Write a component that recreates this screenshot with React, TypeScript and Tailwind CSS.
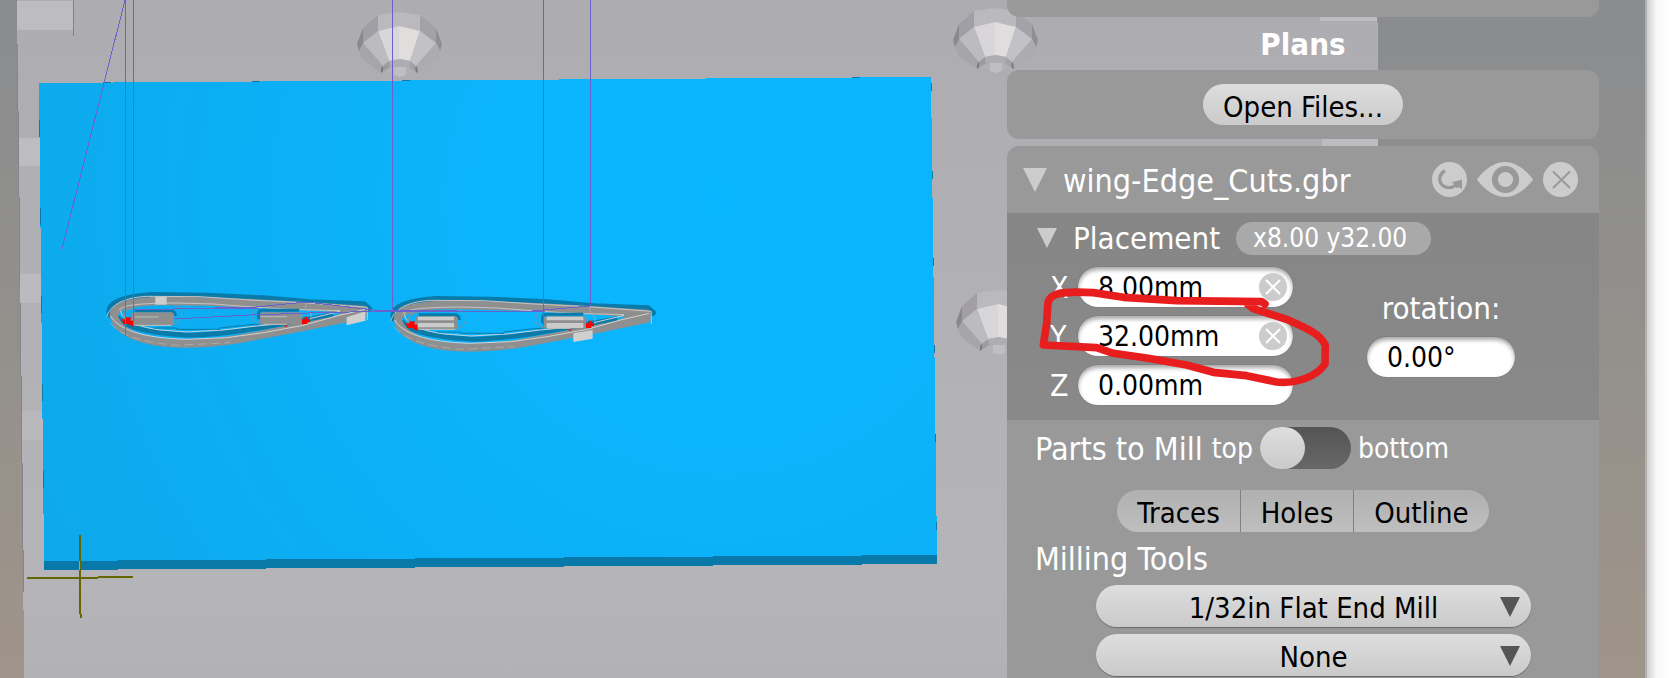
import { useState } from "react";
import type { ReactNode } from "react";

const PATH = "#6a62cc";
const CARD = "bg-[#999999]";
const RAISED = "bg-linear-to-b from-[#dedede] to-[#cacaca]";

/* ---------- 3D view ---------- */

function Knob({ x, y }: { x: number; y: number }) {
  return (
    <g transform={`translate(${x} ${y})`}>
      <path d="M-36 16 L-35 31 L-40 39 L-42 32Z" fill="#89888d" />
      <path d="M37 16 L43 32 L41 40 L37 31Z" fill="#8f8e93" />
      <path d="M-36 16 L-21 3 V19 L-36 31Z" fill="#a19fa5" />
      <path d="M-21 3 L0 0 L21 3 V19 L0 14 L-21 19Z" fill="#bab9be" />
      <path d="M21 3 L37 16 V31 L21 19Z" fill="#a3a2a7" />
      <path d="M-21 19 L0 14 V48 L-10 49Z" fill="#d8d6d8" />
      <path d="M0 14 L21 19 L11 49 L0 47Z" fill="#e1dddd" />
      <path d="M-36 31 L-21 19 L-10 49 L-16 54Z" fill="#bcbbc0" />
      <path d="M37 31 L21 19 L11 49 L17 54Z" fill="#c2c1c6" />
      <path d="M-36 31 L-16 54 L-18 61 L-36 48 L-40 39Z" fill="#a6a5aa" />
      <path d="M37 31 L17 54 L18 61 L38 46 L41 38Z" fill="#acabb0" />
      <path d="M-16 54 L-10 49 L-9 55 L-18 61Z" fill="#9c9ba0" />
      <path d="M17 54 L11 49 L10 55 L18 61Z" fill="#a3a2a7" />
      <path d="M-18 56 L-16 54 V59 L-18 61Z" fill="#7b7a7f" />
      <path d="M16 56 L18 54 L19 61 L17 60Z" fill="#7b7a7f" />
      <path d="M-10 49 L0 47 L11 49 L10 56 L-9 56Z" fill="#aeadb2" />
      <path d="M-14 59 L-6 55 H7 L15 59 L6 63 H-5Z" fill="#b2b1b6" />
      <path d="M-5 55 H7 V63 L1 65 L-5 63Z" fill="#bfbec3" />
    </g>
  );
}

function Wing({ light }: { light?: boolean }) {
  const slot = light ? "#cccbcb" : "#8e8e8e";
  return (
    <g fill="none">
      <path
        d="M60 132 C52 98 104 82 186 76 L350 78 L520 86 L660 98 L822 104 L836 116"
        stroke="#0a7aa9"
        strokeWidth="20"
        strokeLinejoin="round"
        strokeLinecap="round"
      />
      <path
        d="M82 140 C98 170 180 190 300 196 C430 192 560 164 730 134"
        stroke="#0a7aa9"
        strokeWidth="15"
      />
      <path
        d="M72 138 C70 106 130 94 220 93 C400 93 600 104 818 120 L818 134 C700 160 560 186 440 208 C340 224 220 226 160 206 C110 192 78 168 72 138Z"
        stroke="#8f8f8f"
        strokeWidth="25"
        strokeLinejoin="round"
      />
      <path d="M640 108 L820 118 V134 L700 152 L760 126 L640 116Z" fill="#8f8f8f" />
      <path
        d="M50 140 C62 108 92 84 170 79 L330 80 L480 90 L640 98 L832 112 V150"
        stroke="#c6c4c3"
        strokeWidth="3"
      />
      <path
        d="M62 138 C84 176 150 204 290 208 L410 203 L520 188 L640 166 L740 138 L826 118"
        stroke="#d3d1cf"
        strokeWidth="3"
      />
      <path
        d="M86 120 C100 104 150 100 260 99 L370 102 L500 112 L600 118 L750 122"
        stroke="#c6c4c3"
        strokeWidth="3"
      />
      <path
        d="M60 158 C90 196 150 216 260 226 L420 218"
        stroke="#bab8b7"
        strokeWidth="2"
        strokeDasharray="26 14"
      />
      <path
        d="M92 120 C92 150 140 170 210 180 L290 186 L400 180 L500 168 L585 160"
        stroke="#c6d2d8"
        strokeWidth="3"
      />
      <path d="M660 146 L750 124" stroke="#c6d2d8" strokeWidth="3" />
      <path d="M190 174 H260 V178 H390 V174 L460 166 L510 162" stroke="#0a7aa9" strokeWidth="3" />
      <path d="M104 150 C96 130 112 114 130 116" stroke="#8f8f8f" strokeWidth="4" />
      <path d="M256 108 C282 118 282 152 252 162" stroke="#8f8f8f" strokeWidth="3" strokeDasharray="16 5" />
      <path d="M506 110 C478 120 478 152 508 162" stroke="#8f8f8f" strokeWidth="3" strokeDasharray="16 5" />
      <path d="M648 98 V118 C670 128 664 142 660 150" stroke="#a9a8a8" strokeWidth="3" />
      <path d="M134 122 H244 Q256 124 256 138" stroke="#0a7aa9" strokeWidth="9" />
      <path d="M506 148 V128 Q508 121 518 121 H628" stroke="#0a7aa9" strokeWidth="9" />
      <rect x="124" y="127" width="128" height="39" rx="9" fill="#8e8e8e" />
      <rect x="510" y="127" width="127" height="37" rx="9" fill="#8e8e8e" />
      {light ? (
        <>
          <path d="M132 128 H240 V160 H132Z M518 128 H628 V162 H518Z" fill={slot} />
          <path d="M132 143 H246 M512 143 H632" stroke="#8f8f8f" strokeWidth="8" />
        </>
      ) : (
        <path d="M134 141 H206 M512 140 H590" stroke="#bfbebe" strokeWidth="3" />
      )}
      <path d="M134 166 H244 M520 163 H590" stroke="#c6c4c3" strokeWidth="3" />
      {light ? null : <path d="M196 80 H230 V104 H196Z" fill="#cfcdcc" />}
      {light ? (
        <path d="M598 178 L656 168 V194 L598 204Z" fill="#d2d0cf" />
      ) : (
        <path d="M770 142 L826 124 V152 L770 166Z" fill="#d2d0cf" />
      )}
      <path d="M96 148 H106 V142 H122 V152 H130 V170 L114 162 H100Z" fill="#ff0000" />
      <path d="M636 148 H644 V140 H652 V148 H660 V156 H652 V162 H636Z" fill="#ff0000" />
      <path d="M584 166 H592 V170 H584Z" fill="#ff0000" />
    </g>
  );
}

const leftMarks = [
  [39, 120],
  [40, 208],
  [41, 296],
  [42, 384],
  [43, 471],
];
const rightMarks = [
  [931, 83],
  [932, 171],
  [933, 258],
  [934, 345],
  [935, 434],
  [936, 522],
];
const topMarks = [
  [103, 82],
  [252, 81],
  [402, 80],
  [852, 77],
];

function Scene() {
  return (
    <svg className="col-start-1 row-start-1 h-full w-full" role="img" aria-label="Machine view">
      <defs>
        <linearGradient id="bed" x1="0" y1="0" x2="0" y2="1">
          <stop offset="0" stopColor="#adacb0" />
          <stop offset="0.85" stopColor="#b5b4b9" />
          <stop offset="1" stopColor="#b2b1b5" />
        </linearGradient>
        <radialGradient id="stock" gradientUnits="userSpaceOnUse" cx="720" cy="200" r="740">
          <stop offset="0" stopColor="#0ab6ff" />
          <stop offset="0.3" stopColor="#0bb5fd" />
          <stop offset="1" stopColor="#0da9ec" />
        </radialGradient>
      </defs>
      <g shapeRendering="crispEdges">
        <path d="M17 0 H1377 L1378 42 V678 H24 L23 540 L20 260Z" fill="url(#bed)" />
        <path d="M17.5 69 L18.5 150 L20.5 330 L23.5 592" stroke="#85848a" fill="none" />
        <g fill="#bdbcc1">
          <path d="M17 1 H73 V30 H17Z" />
          <path d="M19 138 H40 V166 H19Z" />
          <path d="M20 274 H42 V303 H20Z" fill="#bbbabf" />
          <path d="M22 411 H43 V440 H22Z" fill="#b9b8bd" />
          <path d="M1320 17 H1377 V21 H1320Z M1322 139 H1378 V146 H1322Z" />
        </g>
        <path d="M73 0 H74 V36 H73Z" fill="#828186" />
      </g>
      <Knob x={399} y={12} />
      <Knob x={995} y={8} />
      <Knob x={998} y={290} />
      <g shapeRendering="crispEdges">
        <path d="M44 560 L937 554 V564 L44 570Z" fill="#0879a8" />
        <path d="M39 83 L931 77 L937 555 L44 561Z" fill="url(#stock)" />
        <g fill="#0a7aa9">
          {leftMarks.map(([x, y]) => (
            <rect key={y} x={x} y={y} width="1" height="17" />
          ))}
          {rightMarks.map(([x, y]) => (
            <rect key={y} x={x} y={y} width="1" height="8" />
          ))}
          {topMarks.map(([x, y]) => (
            <rect key={x} x={x} y={y} width="8" height="1" />
          ))}
        </g>
      </g>
      <g transform="translate(90 270) scale(0.3333)">
        <Wing />
      </g>
      <g transform="translate(374 274) scale(0.3333)">
        <Wing light />
      </g>
      <g fill="none" stroke={PATH} strokeWidth="1" shapeRendering="crispEdges">
        <path d="M125.5 0 V336 M133.5 0 V326 M392.5 0 V312 M543.5 0 V326 M590.5 0 V306" />
        <path d="M125 0 L62 249" />
        <path d="M133 310 L256 307 L306 302 L374 310 H392 L520 312 L590 306" />
        <path d="M174 319 L250 315 L308 313 L392 311 M210 308 H260 M374 311 H545" />
      </g>
      <g fill="#666600">
        <rect x="79" y="535" width="2" height="79" />
        <rect x="80" y="614" width="2" height="4" />
        <rect x="27" y="577" width="71" height="2" />
        <rect x="98" y="576" width="35" height="2" />
        <rect x="79" y="561" width="1" height="9" fill="#8fa3c8" />
      </g>
    </svg>
  );
}

/* ---------- Controls ---------- */

const INPUT =
  "block h-10 rounded-full bg-white pt-[2px] pl-5 text-[28px] text-black shadow-[inset_0_3px_4px_rgba(0,0,0,0.35),0_0_1px_rgba(0,0,0,0.4)] outline-none";

function Disclosure({ label, small }: { label: string; small?: boolean }) {
  return (
    <button type="button" aria-label={label} className={small ? "w-5 shrink-0" : "w-6 shrink-0"}>
      <svg viewBox="0 0 22 22" className="w-full">
        <path d="M0 0 H22 L11 22Z" fill="#cccccc" />
      </svg>
    </button>
  );
}

function Field({
  label,
  value,
  clearable,
}: {
  label: string;
  value: string;
  clearable?: boolean;
}) {
  const [text, setText] = useState(value);
  return (
    <div className="flex items-center">
      <label htmlFor={`axis-${label}`} className="w-7 pt-[2px] text-[30px] leading-[38px]">
        {label}
      </label>
      <div className="relative">
        <input
          id={`axis-${label}`}
          value={text}
          onChange={(e) => setText(e.target.value)}
          className={`w-[215px] ${INPUT}`}
        />
        {clearable ? (
          <button
            type="button"
            aria-label={`Clear ${label}`}
            onClick={() => setText("0.00mm")}
            className="absolute top-[6px] right-[6px] size-7"
          >
            <svg viewBox="0 0 28 28">
              <circle cx="14" cy="14" r="14" fill="#cccccc" />
              <path d="M7 7 L21 21 M21 7 L7 21" stroke="#fff" strokeWidth="2" />
            </svg>
          </button>
        ) : null}
      </div>
    </div>
  );
}

function ToolSelect({ label, value, options }: { label: string; value: string; options: string[] }) {
  return (
    <div className="relative">
      <select
        aria-label={label}
        defaultValue={value}
        className={`block h-[42px] w-full appearance-none rounded-full pt-[2px] text-center text-[29px] text-black shadow-[0_1px_1px_rgba(0,0,0,0.3)] outline-none [text-align-last:center] ${RAISED}`}
      >
        {options.map((o) => (
          <option key={o}>{o}</option>
        ))}
      </select>
      <svg viewBox="0 0 20 20" className="pointer-events-none absolute top-3 right-[11px] size-5">
        <path d="M0 0 H20 L10 20Z" fill="#555555" />
      </svg>
    </div>
  );
}

function IconButton({ label, children }: { label: string; children: ReactNode }) {
  return (
    <button type="button" aria-label={label} className="shrink-0">
      {children}
    </button>
  );
}

function PlanHeader() {
  return (
    <div className="flex h-[67px] items-center pr-[21px] pl-4">
      <Disclosure label="Collapse plan" />
      <h3 className="ml-4 flex-1 pt-[2px] text-[32px] leading-10">wing-Edge_Cuts.gbr</h3>
      <div className="flex items-center gap-[10px]">
        <IconButton label="Reload">
          <svg viewBox="0 0 35 35" className="size-[35px]">
            <circle cx="17.5" cy="17.5" r="17.5" fill="#cccccc" />
            <path
              d="M13 8.8 C7.6 11.5 6.4 17.5 9.2 21.8 C12.6 26.6 19.5 26.8 23.8 23"
              fill="none"
              stroke="#999"
              strokeWidth="3.2"
            />
            <path d="M19.5 20.5 L30 17.5 V27.5 L27.5 25.3 L24.5 26 L22 22Z" fill="#999" />
          </svg>
        </IconButton>
        <IconButton label="Toggle visibility">
          <svg viewBox="0 0 56 35" className="h-[35px] w-14">
            <path
              d="M0 17.5 C3 13 14 0 28 0 C42 0 53 13 56 17.5 C53 22 42 35 28 35 C14 35 3 22 0 17.5Z"
              fill="#cccccc"
            />
            <circle cx="28.5" cy="17.5" r="10.6" fill="none" stroke="#999" strokeWidth="6" />
          </svg>
        </IconButton>
        <IconButton label="Remove plan">
          <svg viewBox="0 0 35 35" className="size-[35px]">
            <circle cx="17.5" cy="17.5" r="17.5" fill="#cccccc" />
            <path d="M10 9.5 L27 26 M27 9.5 L10 26" stroke="#999" strokeWidth="2" />
          </svg>
        </IconButton>
      </div>
    </div>
  );
}

function Placement() {
  return (
    <section className="relative h-[207px] bg-linear-to-b from-[#868686] to-[#898989]">
      <div className="flex items-center pt-1 pl-[30px]">
        <Disclosure label="Collapse placement" small />
        <h4 className="ml-4 text-[31px] leading-[42px]">Placement</h4>
        <span className="ml-4 h-[33px] rounded-full bg-[#a9a9a9] px-[17px] pr-6 text-[26px] leading-[33px]">
          x8.00 y32.00
        </span>
      </div>
      <div className="flex items-start pt-2 pl-[43px]">
        <div className="flex flex-col gap-[9px]">
          <Field label="X" value="8.00mm" clearable />
          <Field label="Y" value="32.00mm" clearable />
          <Field label="Z" value="0.00mm" />
        </div>
        <div className="ml-[74px] flex flex-col items-center pt-5">
          <label htmlFor="rotation" className="text-[31px] leading-[42px]">
            rotation:
          </label>
          <input
            id="rotation"
            defaultValue="0.00°"
            className={`mt-2 w-[148px] ${INPUT}`}
          />
        </div>
      </div>
      <svg className="pointer-events-none absolute inset-0 h-full w-full" aria-hidden="true">
        <g transform="translate(-27 -3) scale(0.3333)">
          <path
            d="M855 282 L845 275 L590 272 L430 262 L340 248 C240 242 202 250 203 290 L200 340 L190 405 L350 413 L400 430 L500 444 L620 465 L700 487 L800 497 L890 516 C950 522 1010 500 1035 462 L1036 405 C1020 370 970 350 920 328 L820 296 L803 283"
            fill="none"
            stroke="#e81e1e"
            strokeWidth="23"
            strokeLinecap="round"
            strokeLinejoin="round"
          />
        </g>
      </svg>
    </section>
  );
}

function PartsToMill() {
  const [bottom, setBottom] = useState(false);
  return (
    <section>
      <div className="flex h-14 items-center pl-7">
        <h4 className="pt-[2px] text-[32px]">Parts to Mill</h4>
        <span className="ml-[9px] pt-[2px] text-[28px]">top</span>
        <button
          type="button"
          role="switch"
          aria-checked={bottom}
          aria-label="Mill bottom side"
          onClick={() => setBottom(!bottom)}
          className={`mx-[7px] flex h-[42px] w-[91px] rounded-full bg-linear-to-b from-[#545454] to-[#686868] ${bottom ? "justify-end" : "justify-start"}`}
        >
          <span className={`h-[42px] w-[45px] rounded-full ${RAISED}`} />
        </button>
        <span className="pt-[2px] text-[28px]">bottom</span>
      </div>
      <div className="flex justify-center pt-[14px]">
        <div className="flex h-[42px] divide-x divide-[#808080] overflow-hidden rounded-full bg-linear-to-b from-[#b0b0b0] to-[#bfbfbf] text-[29px] text-black">
          {["Traces", "Holes", "Outline"].map((t) => (
            <button key={t} type="button" className="px-5 pt-[2px]">
              {t}
            </button>
          ))}
        </div>
      </div>
    </section>
  );
}

export default function App() {
  return (
    <div className="flex h-screen overflow-hidden bg-white font-['DejaVu_Sans_Condensed','Noto_Sans',sans-serif] text-white">
      <main className="grid min-w-0 flex-1 grid-cols-1 grid-rows-1 overflow-hidden border-r-2 border-[#b0b0b0] bg-linear-to-b from-[#8a8c8f] via-[#92908c] via-45% to-[#9f9489]">
        <Scene />
        <aside className="col-start-1 row-start-1 mr-[46px] w-[592px] justify-self-end">
          <div className={`h-[17px] rounded-b-xl ${CARD}`} />
          <h2 className="pt-[2px] text-center text-[31px] leading-[51px] font-bold">Plans</h2>
          <div className={`flex h-[69px] items-center justify-center rounded-xl ${CARD}`}>
            <button type="button" className={`h-[41px] rounded-full px-5 pt-[2px] text-[29px] text-black ${RAISED}`}>
              Open Files...
            </button>
          </div>
          <article className={`mt-[7px] rounded-t-xl pb-10 ${CARD}`}>
            <PlanHeader />
            <Placement />
            <PartsToMill />
            <section className="pr-[68px] pl-7">
              <h4 className="pt-[2px] text-[32px] leading-[51px]">Milling Tools</h4>
              <div className="flex flex-col gap-[7px] pl-[61px]">
                <ToolSelect
                  label="Milling tool 1"
                  value="1/32in Flat End Mill"
                  options={["1/32in Flat End Mill", "None"]}
                />
                <ToolSelect
                  label="Milling tool 2"
                  value="None"
                  options={["None", "1/32in Flat End Mill"]}
                />
              </div>
            </section>
          </article>
        </aside>
      </main>
      <div className="w-[23px] shrink-0 bg-linear-to-r from-[#cfcfcf] via-[#f7f7f7] via-40% to-white" />
    </div>
  );
}
